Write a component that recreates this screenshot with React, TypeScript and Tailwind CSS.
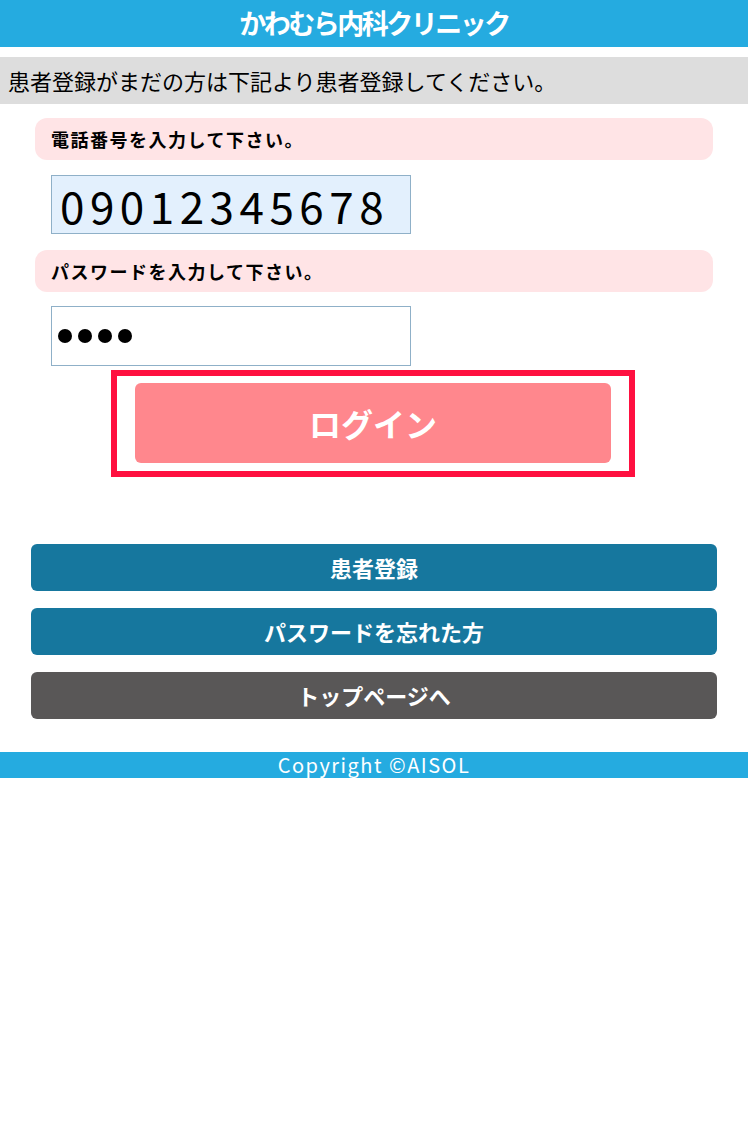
const FONT = "font-['Noto_Sans_CJK_JP','Noto_Sans',sans-serif]";

function Label({ text }: { text: string }) {
  return (
    <div className="mx-[35px] flex h-[42px] items-center rounded-xl bg-[#ffe4e6] pl-4 text-[18px] font-bold tracking-[1.5px] text-black">
      {text}
    </div>
  );
}

function NavButton({ text, color }: { text: string; color: string }) {
  return (
    <div
      className={`mx-[31px] flex h-[47px] items-center justify-center rounded-md text-[22px] font-bold text-white ${color}`}
    >
      {text}
    </div>
  );
}

export default function App() {
  return (
    <div className={`min-h-screen bg-white ${FONT}`}>
      <header className="flex h-[47px] items-center justify-center bg-[#25abe0] text-[27px] font-bold tracking-[-2.5px] text-white">
        かわむら内科クリニック
      </header>

      <div className="mt-[10px] flex h-[47px] items-center bg-[#dddddd] pl-2 text-[22px] text-black">
        患者登録がまだの方は下記より患者登録してください。
      </div>

      <div className="mt-[14px]">
        <Label text="電話番号を入力して下さい。" />
        <div className="ml-[51px] mt-[15px] flex h-[59px] w-[360px] items-center border border-[#8fb0c8] bg-[#e3f0fd] pl-2 text-[44px] leading-none tracking-[5.5px] text-black">
          09012345678
        </div>
      </div>

      <div className="mt-[16px]">
        <Label text="パスワードを入力して下さい。" />
        <div className="ml-[51px] mt-[14px] flex h-[60px] w-[360px] items-center gap-[6px] border border-[#8fb0c8] bg-white pl-[6px]">
          {[0, 1, 2, 3].map((i) => (
            <span key={i} className="size-[14px] rounded-full bg-black" />
          ))}
        </div>
      </div>

      <div className="ml-[111px] mt-[4px] w-[524px] border-[6px] border-[#ff1040] px-[18px] pt-[7px] pb-[8px]">
        <div className="flex h-[80px] items-center justify-center rounded-md bg-[#ff878d] text-[32px] font-bold text-white">
          ログイン
        </div>
      </div>

      <div className="mt-[67px] flex flex-col gap-[17px]">
        <NavButton text="患者登録" color="bg-[#16779e]" />
        <NavButton text="パスワードを忘れた方" color="bg-[#16779e]" />
        <NavButton text="トップページへ" color="bg-[#595757]" />
      </div>

      <footer className="mt-[33px] flex h-[26px] items-center justify-center bg-[#25abe0] text-[20px] tracking-[1.5px] text-white">
        Copyright ©AISOL
      </footer>
    </div>
  );
}
